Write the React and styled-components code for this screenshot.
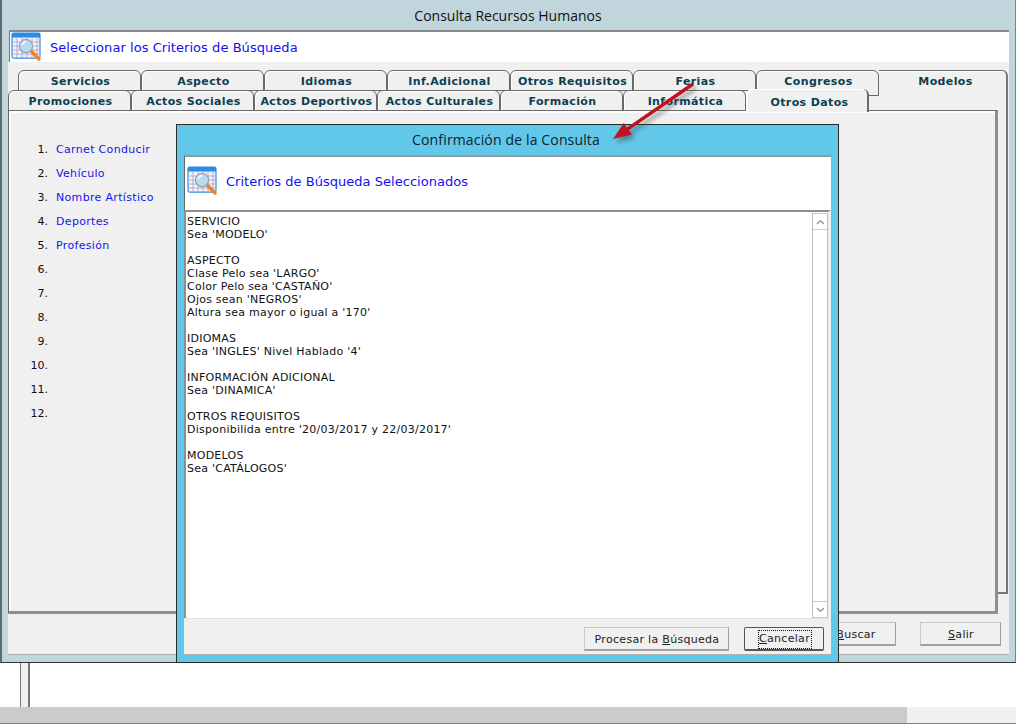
import React from "react"
import styled, { createGlobalStyle } from "styled-components"

const GlobalStyle = createGlobalStyle`
  html, body { margin: 0; padding: 0; background: #fff; }
  * { box-sizing: border-box; }
`

const topTabs = ["Servicios", "Aspecto", "Idiomas", "Inf.Adicional", "Otros Requisitos", "Ferias", "Congresos"]

const bottomTabs = ["Promociones", "Actos Sociales", "Actos Deportivos", "Actos Culturales", "Formación", "Informática", "Otros Datos"]

const criterios = ["Carnet Conducir", "Vehículo", "Nombre Artístico", "Deportes", "Profesión", "", "", "", "", "", "", ""]

const resumen = [
  ["SERVICIO", "Sea 'MODELO'"],
  ["ASPECTO", "Clase Pelo sea 'LARGO'", "Color Pelo sea 'CASTAÑO'", "Ojos sean 'NEGROS'", "Altura sea mayor o igual a '170'"],
  ["IDIOMAS", "Sea 'INGLES' Nivel Hablado '4'"],
  ["INFORMACIÓN ADICIONAL", "Sea 'DINAMICA'"],
  ["OTROS REQUISITOS", "Disponibilida entre '20/03/2017 y 22/03/2017'"],
  ["MODELOS", "Sea 'CATÁLOGOS'"],
]

const SearchIcon = ({ size }) => (
  <svg width={size} height={size * 0.94} viewBox="0 0 32 30">
    <rect x="1" y="1" width="28" height="25" rx="1.5" fill="#f4f2fa" stroke="#2f8fe8" strokeWidth="1.2" />
    <rect x="1" y="1" width="28" height="4.5" fill="#2a8ce6" />
    <path d="M6 6v20M11 6v20M16 6v20M21 6v20M26 6v20M1 10h28M1 14h28M1 18h28M1 22h28" stroke="#a79cc4" strokeWidth="0.8" />
    <path d="M20 19l8 8" stroke="#e8842c" strokeWidth="3.4" strokeLinecap="round" />
    <circle cx="15" cy="14" r="6.6" fill="#b5dcf2" stroke="#8fa8b8" strokeWidth="1.3" />
    <path d="M11 13a4.5 4.5 0 0 1 4-3.5" fill="none" stroke="#fff" strokeWidth="1.2" />
  </svg>
)

const App = () => {
  return (
    <>
      <GlobalStyle />
      <Page>
        <Window>
          <TitleBar>Consulta Recursos Humanos</TitleBar>
          <Header>
            <SearchIcon size={32} />
            <HeaderText>Seleccionar los Criterios de Búsqueda</HeaderText>
          </Header>
          <Body>
            <TabRow $indent={10}>
              {topTabs.map((label) => (
                <Tab key={label} $step={label === "Congresos"}>{label}</Tab>
              ))}
              <SheetTab>Modelos</SheetTab>
            </TabRow>
            <TabRow $indent={0} $front>
              {bottomTabs.map((label) => (
                <Tab key={label} $active={label === "Otros Datos"}>{label}</Tab>
              ))}
            </TabRow>
            <Panel>
              <List>
                {criterios.map((label, i) => (
                  <ListRow key={i}>
                    <ListNumber>{i + 1}.</ListNumber>
                    <ListLabel>{label}</ListLabel>
                  </ListRow>
                ))}
              </List>
            </Panel>
            <WindowFooter>
              <Button $width={81}><span><u>B</u>uscar</span></Button>
              <Button $width={81}><span><u>S</u>alir</span></Button>
            </WindowFooter>
          </Body>
        </Window>

        <Dialog>
          <DialogTitle>Confirmación de la Consulta</DialogTitle>
          <DialogHeader>
            <SearchIcon size={32} />
            <DialogHeaderText>Criterios de Búsqueda Seleccionados</DialogHeaderText>
          </DialogHeader>
          <TextArea>
            <Summary>
              {resumen.map((block) => (
                <SummaryBlock key={block[0]}>
                  {block.map((line) => (
                    <div key={line}>{line}</div>
                  ))}
                </SummaryBlock>
              ))}
            </Summary>
            <ScrollBar>
              <ScrollButton>
                <svg width="9" height="6" viewBox="0 0 9 6"><path d="M1 5l3.5-3.5L8 5" fill="none" stroke="#8a8a8a" strokeWidth="1.2" /></svg>
              </ScrollButton>
              <ScrollButton>
                <svg width="9" height="6" viewBox="0 0 9 6"><path d="M1 1l3.5 3.5L8 1" fill="none" stroke="#8a8a8a" strokeWidth="1.2" /></svg>
              </ScrollButton>
            </ScrollBar>
          </TextArea>
          <DialogFooter>
            <Button $width={145}><span>Procesar la <u>B</u>úsqueda</span></Button>
            <Button $width={80} $focused>
              <FocusRing><u>C</u>ancelar</FocusRing>
            </Button>
          </DialogFooter>
        </Dialog>

        <Arrow width="110" height="80" viewBox="0 0 110 80">
          <defs>
            <filter id="arrowShadow" x="-20%" y="-20%" width="140%" height="140%">
              <feGaussianBlur stdDeviation="2" />
            </filter>
          </defs>
          <g filter="url(#arrowShadow)" opacity="0.5" fill="#444">
            <path d="M82 4.6L16.8 49.4 13.8 45 3 61 21.8 56.6 18.8 52.2 84 7.4z" transform="translate(3 4)" />
          </g>
          <path d="M82 4.6L16.8 49.4 13.8 45 3 61 21.8 56.6 18.8 52.2 84 7.4z" fill="#c2121f" />
        </Arrow>

        <BottomArea>
          <Splitter />
        </BottomArea>
        <HScroll>
          <HScrollThumb />
        </HScroll>
      </Page>
    </>
  )
}

export default App

const Page = styled.div`
  position: relative;
  width: 1016px;
  height: 724px;
  overflow: hidden;
  background: #fff;
  display: flex;
  flex-direction: column;
`

const Window = styled.div`
  height: 663px;
  background: #c0d5dc;
  border-left: 2px solid #5f6b70;
  border-right: 1px solid #7a8488;
  border-bottom: 1px solid #333;
  padding: 0 6px 7px 6px;
  display: flex;
  flex-direction: column;
`

const TitleBar = styled.div`
  height: 30px;
  display: flex;
  align-items: center;
  justify-content: center;
  font: 14px "Open Sans", sans-serif;
  color: #111;
  padding-right: 1px;
`

const Header = styled.div`
  height: 32px;
  margin-left: 1px;
  background: #fff;
  border-top: 2px solid #8a8a8a;
  border-left: 1px solid #777;
  display: flex;
  align-items: center;
  gap: 7px;
  padding: 0 0 0 1px;
  flex-shrink: 0;
`

const HeaderText = styled.span`
  font: 13px "DejaVu Sans", sans-serif;
  letter-spacing: 0.05px;
  color: #1010f0;
`

const Body = styled.div`
  flex: 1;
  background: #f0f0f0;
  padding-top: 8px;
  display: flex;
  flex-direction: column;
  min-height: 0;
`

const TabRow = styled.div`
  display: flex;
  height: 20px;
  padding-left: ${(p) => p.$indent}px;
  position: relative;
  z-index: ${(p) => (p.$front ? 3 : 1)};
  flex-shrink: 0;
`

const Tab = styled.div`
  width: 123px;
  height: ${(p) => (p.$active ? 23 : p.$step ? 26 : 21)}px;
  margin-top: ${(p) => (p.$active ? -1 : 0)}px;
  background: #f0f0f0;
  border: 1px solid #6a6a6a;
  border-top-width: ${(p) => (p.$active ? 0 : 1)}px;
  border-left-color: ${(p) => (p.$active ? "#fff" : "#6a6a6a")};
  border-right-width: ${(p) => (p.$active ? 2 : 1)}px;
  border-bottom-width: ${(p) => (p.$active ? 0 : 1)}px;
  border-radius: 6px 6px 0 0;
  box-shadow: inset 1px 1px 0 #fff;
  display: flex;
  align-items: ${(p) => (p.$step ? "flex-start" : "center")};
  justify-content: center;
  padding-top: ${(p) => (p.$step ? 4 : p.$active ? 4 : 2)}px;
  padding-left: ${(p) => (p.$active ? 5 : 2)}px;
  position: relative;
  z-index: ${(p) => (p.$active ? 3 : 1)};
  font: bold 11px "DejaVu Sans", sans-serif;
  letter-spacing: 0.38px;
  color: #0c3f52;
  white-space: nowrap;
`

const SheetTab = styled.div`
  width: 129px;
  height: 524px;
  background: #f0f0f0;
  border-top: 1px solid #6a6a6a;
  border-right: 2px solid #777;
  border-bottom: 2px solid #777;
  border-radius: 0 6px 0 0;
  box-shadow: inset 0 1px 0 #fff;
  padding: 4px 0 0 6px;
  text-align: center;
  font: bold 11px "DejaVu Sans", sans-serif;
  letter-spacing: 0.38px;
  color: #0c3f52;
`

const Panel = styled.div`
  margin: 0 11px 0 0;
  height: 504px;
  position: relative;
  z-index: 2;
  background: #f0f0f0;
  border-top: 1px solid #666;
  border-left: 1px solid #666;
  border-right: 3px solid #8e8e8e;
  border-bottom: 3px solid #8e8e8e;
  box-shadow: inset 2px 2px 0 #fff;
  padding-top: 26px;
  flex-shrink: 0;
`

const List = styled.div`
  display: flex;
  flex-direction: column;
  width: 170px;
`

const ListRow = styled.div`
  height: 24px;
  display: grid;
  grid-template-columns: 39px 1fr;
  column-gap: 8px;
  align-items: center;
  font: 11px "DejaVu Sans", sans-serif;
`

const ListNumber = styled.span`
  text-align: right;
  color: #111;
`

const ListLabel = styled.span`
  color: #1515e8;
  letter-spacing: 0.33px;
  white-space: nowrap;
`

const WindowFooter = styled.div`
  flex: 1;
  display: flex;
  justify-content: flex-end;
  gap: 24px;
  padding: 8px 8px 0 0;
  border-bottom: 1px solid #b0b0b0;
`

const Button = styled.div`
  width: ${(p) => p.$width}px;
  height: 24px;
  background: #f0f0f0;
  border: 1px solid ${(p) => (p.$focused ? "#555" : "#c8c8c8")};
  border-right-color: ${(p) => (p.$focused ? "#555" : "#a0a0a0")};
  border-bottom: 2px solid ${(p) => (p.$focused ? "#555" : "#a0a0a0")};
  border-radius: ${(p) => (p.$focused ? "2px" : "0")};
  display: flex;
  align-items: center;
  justify-content: center;
  padding: 1px 0 0 1px;
  font: 11px "DejaVu Sans", sans-serif;
  letter-spacing: 0.3px;
  color: #222;
  white-space: nowrap;
`

const FocusRing = styled.span`
  outline: 1px dotted #111;
  width: 52px;
  height: 17px;
  line-height: 16px;
  text-align: center;
`

const Dialog = styled.div`
  position: absolute;
  left: 176px;
  top: 124px;
  width: 663px;
  height: 539px;
  background: #62c8ea;
  border: 1px solid #2a2a2a;
  padding: 0 7px 7px 7px;
  display: flex;
  flex-direction: column;
  z-index: 5;
`

const DialogTitle = styled.div`
  height: 30px;
  padding: 0 3px 2px 0;
  display: flex;
  align-items: center;
  justify-content: center;
  font: 14px "Open Sans", sans-serif;
  letter-spacing: 0.15px;
  color: #10222c;
  flex-shrink: 0;
`

const DialogHeader = styled.div`
  height: 55px;
  background: #fff;
  border-top: 2px solid #8e9a9f;
  border-left: 1px solid #666;
  display: flex;
  align-items: center;
  gap: 7px;
  padding: 0 0 5px 2px;
  flex-shrink: 0;
`

const DialogHeaderText = styled.span`
  font: 13px "DejaVu Sans", sans-serif;
  letter-spacing: 0.03px;
  color: #1010f0;
`

const TextArea = styled.div`
  flex: 1;
  min-height: 0;
  background: #fff;
  border-top: 2px solid #8e8e8e;
  border-left: 2px solid #8e8e8e;
  border-right: 3px solid #f0f0f0;
  display: flex;
  justify-content: space-between;
`

const Summary = styled.div`
  padding: 3px 0 0 1px;
  font: 11px/13px "DejaVu Sans", sans-serif;
  letter-spacing: 0.24px;
  color: #111;
`

const SummaryBlock = styled.div`
  margin-bottom: 13px;
`

const ScrollBar = styled.div`
  width: 16px;
  margin: 1px 0 0;
  border-left: 1px solid #bbb;
  border-right: 1px solid #bbb;
  display: flex;
  flex-direction: column;
  justify-content: space-between;
`

const ScrollButton = styled.div`
  height: 17px;
  background: #fff;
  border-top: 1px solid #ccc;
  border-bottom: 1px solid #ccc;
  display: flex;
  align-items: center;
  justify-content: center;
`

const DialogFooter = styled.div`
  height: 37px;
  background: #f0f0f0;
  border-top: 1px solid #e2e2e2;
  border-bottom: 1px solid #b0b0b0;
  display: flex;
  justify-content: flex-end;
  gap: 15px;
  padding: 8px 7px 0 0;
  flex-shrink: 0;
`

const Arrow = styled.svg`
  position: absolute;
  left: 610px;
  top: 78px;
  z-index: 6;
`

const BottomArea = styled.div`
  height: 44px;
  padding-left: 20px;
  background: #fff;
`

const Splitter = styled.div`
  width: 10px;
  height: 100%;
  background: #f0f0f0;
  border-left: 1px solid #777;
  border-right: 2px solid #777;
`

const HScroll = styled.div`
  height: 17px;
  background: #f0f0f0;
  border-bottom: 1px solid #8b7a95;
`

const HScrollThumb = styled.div`
  width: 907px;
  height: 100%;
  background: #cbcbcb;
`
